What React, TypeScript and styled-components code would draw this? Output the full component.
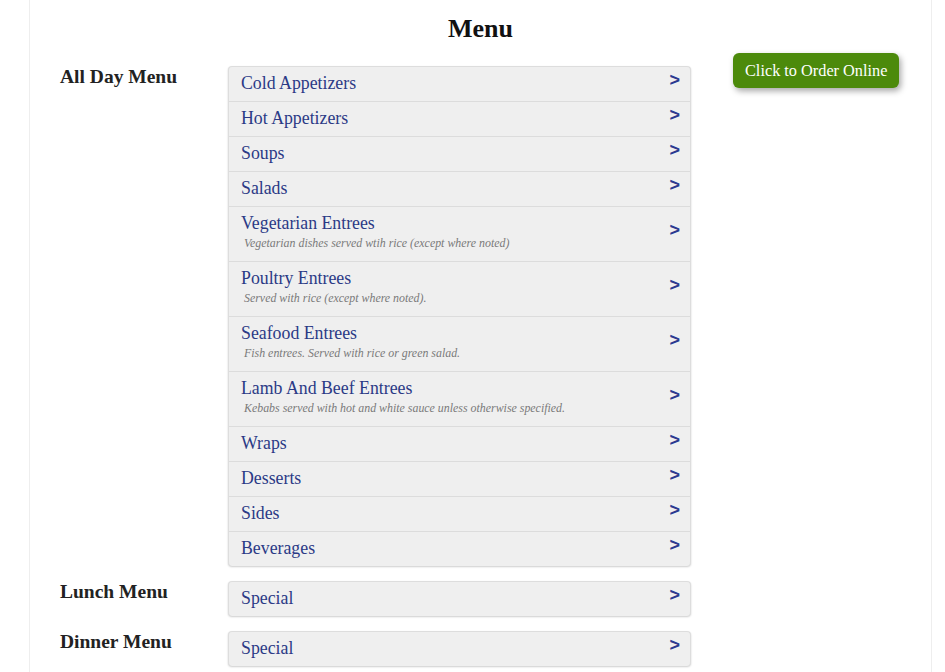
import React from "react";
import styled, { createGlobalStyle } from "styled-components";

const Global = createGlobalStyle`
  html, body { margin: 0; padding: 0; background: #fff; }
  body { font-family: "Liberation Serif", "Times New Roman", serif; color: #222; }
`;

const Page = styled.div`
  margin: 0 13px 0 29px;
  border-left: 1px solid #eeeeee;
  border-right: 1px solid #eeeeee;
  padding: 14px 30px 20px;
  min-height: 672px;
  box-sizing: border-box;
`;

const Title = styled.h1`
  margin: 0 0 9px;
  font-size: 26px;
  line-height: 30px;
  font-weight: bold;
  text-align: center;
  color: #111;
`;

const Main = styled.div`
  display: flex;
  align-items: flex-start;
  gap: 42px;
`;

const Sections = styled.div`
  display: flex;
  flex-direction: column;
  gap: 15px;
  padding-top: 13px;
`;

const Section = styled.section`
  display: grid;
  grid-template-columns: 168px 463px;
  align-items: start;
`;

const Label = styled.h2`
  margin: 0;
  font-size: 19.5px;
  line-height: 22px;
  font-weight: bold;
  color: #222;
`;

const Accordion = styled.div`
  background: #efefef;
  border: 1px solid #dddddd;
  border-bottom: 0;
  border-radius: 4px;
  box-shadow: 0 1px 2px rgba(0, 0, 0, 0.2);
  overflow: hidden;
`;

const Item = styled.div`
  display: flex;
  align-items: center;
  padding: 6px 10px 8px 12px;
  & + & { border-top: 1px solid #dcdcdc; }
`;

const ItemText = styled.div`
  flex: 1;
  min-width: 0;
`;

const ItemTitle = styled.div`
  font-size: 17.8px;
  line-height: 20px;
  color: #2b3a86;
`;

const ItemSub = styled.div`
  font-style: italic;
  font-size: 11.9px;
  line-height: 20px;
  color: #7a7a7a;
  padding-left: 3px;
`;

const Chevron = styled.span`
  font-family: "Liberation Sans", Arial, sans-serif;
  font-weight: bold;
  font-size: 18px;
  line-height: 20px;
  height: 20px;
  color: #2b3990;
  margin-top: -7px;
`;

const Aside = styled.div`
  display: flex;
`;

const OrderButton = styled.a`
  display: inline-block;
  background: #4c8a0b;
  color: #fff;
  font-size: 16.3px;
  line-height: 35px;
  height: 35px;
  padding: 0 12px;
  border-radius: 6px;
  box-shadow: 2px 3px 6px rgba(0, 0, 0, 0.35);
  text-decoration: none;
  white-space: nowrap;
`;

type Entry = { title: string; sub?: string };

const allDay: Entry[] = [
  { title: "Cold Appetizers" },
  { title: "Hot Appetizers" },
  { title: "Soups" },
  { title: "Salads" },
  { title: "Vegetarian Entrees", sub: "Vegetarian dishes served wtih rice (except where noted)" },
  { title: "Poultry Entrees", sub: "Served with rice (except where noted)." },
  { title: "Seafood Entrees", sub: "Fish entrees. Served with rice or green salad." },
  { title: "Lamb And Beef Entrees", sub: "Kebabs served with hot and white sauce unless otherwise specified." },
  { title: "Wraps" },
  { title: "Desserts" },
  { title: "Sides" },
  { title: "Beverages" },
];

const sections: { label: string; items: Entry[] }[] = [
  { label: "All Day Menu", items: allDay },
  { label: "Lunch Menu", items: [{ title: "Special" }] },
  { label: "Dinner Menu", items: [{ title: "Special" }] },
];

export default function App() {
  return (
    <>
      <Global />
      <Page>
        <Title>Menu</Title>
        <Main>
          <Sections>
            {sections.map((s) => (
              <Section key={s.label}>
                <Label>{s.label}</Label>
                <Accordion>
                  {s.items.map((it, i) => (
                    <Item key={i}>
                      <ItemText>
                        <ItemTitle>{it.title}</ItemTitle>
                        {it.sub && <ItemSub>{it.sub}</ItemSub>}
                      </ItemText>
                      <Chevron>&gt;</Chevron>
                    </Item>
                  ))}
                </Accordion>
              </Section>
            ))}
          </Sections>
          <Aside>
            <OrderButton href="#">Click to Order Online</OrderButton>
          </Aside>
        </Main>
      </Page>
    </>
  );
}
